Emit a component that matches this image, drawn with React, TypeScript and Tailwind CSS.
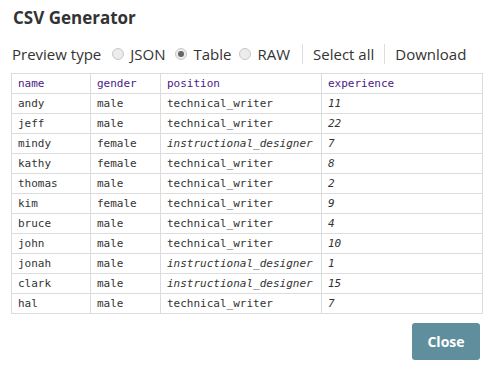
import React from "react";

const rows: [string, string, string, string][] = [
  ["andy", "male", "technical_writer", "11"],
  ["jeff", "male", "technical_writer", "22"],
  ["mindy", "female", "instructional_designer", "7"],
  ["kathy", "female", "technical_writer", "8"],
  ["thomas", "male", "technical_writer", "2"],
  ["kim", "female", "technical_writer", "9"],
  ["bruce", "male", "technical_writer", "4"],
  ["john", "male", "technical_writer", "10"],
  ["jonah", "male", "instructional_designer", "1"],
  ["clark", "male", "instructional_designer", "15"],
  ["hal", "male", "technical_writer", "7"],
];

function Radio({ checked }: { checked?: boolean }) {
  return (
    <span className="inline-flex w-[12px] h-[12px] rounded-full border border-[#c8c8c8] bg-[#ececec] items-center justify-center mr-[6px]">
      {checked && <span className="w-[6px] h-[6px] rounded-full bg-[#666]" />}
    </span>
  );
}

export default function App() {
  const mono = { fontFamily: "'DejaVu Sans Mono', monospace" };
  return (
    <div
      className="w-[495px] h-[370px] bg-white text-[#333] relative"
      style={{ fontFamily: "'Open Sans', sans-serif" }}
    >
      <div className="pl-[13px] pt-[6px] text-[17px] font-bold leading-[24px] text-[#333]">
        CSV Generator
      </div>
      <div className="flex items-center pl-[12px] mt-[13px] h-[22px] text-[15px] text-[#333]">
        <span className="mr-[11px]">Preview type</span>
        <label className="flex items-center mr-[10px]">
          <Radio />
          JSON
        </label>
        <label className="flex items-center mr-[8px]">
          <Radio checked />
          Table
        </label>
        <label className="flex items-center">
          <Radio />
          RAW
        </label>
        <span className="w-px h-[20px] bg-[#ddd] ml-[12px] mr-[10px]" />
        <span>Select all</span>
        <span className="w-px h-[20px] bg-[#ddd] ml-[10px] mr-[10px]" />
        <span>Download</span>
      </div>
      <table
        className="ml-[11px] mt-[8px] border-collapse text-[11px] leading-[19px]"
        style={mono}
      >
        <thead>
          <tr>
            {["name", "gender", "position", "experience"].map((h, i) => (
              <th
                key={h}
                className={`border border-[#dcdcdc] text-left font-normal text-[#4b1a86] pl-[6px] py-0 h-[20px] ${
                  ["w-[79px]", "w-[70px]", "w-[161px]", "w-[161px]"][i]
                }`}
              >
                {h}
              </th>
            ))}
          </tr>
        </thead>
        <tbody>
          {rows.map((r) => (
            <tr key={r[0]}>
              <td className="border border-[#dcdcdc] pl-[6px] h-[20px]">{r[0]}</td>
              <td className="border border-[#dcdcdc] pl-[6px]">{r[1]}</td>
              <td
                className={`border border-[#dcdcdc] pl-[6px] ${
                  r[2] === "instructional_designer" ? "italic" : ""
                }`}
              >
                {r[2]}
              </td>
              <td className="border border-[#dcdcdc] pl-[6px] italic">{r[3]}</td>
            </tr>
          ))}
        </tbody>
      </table>
      <div className="flex justify-end pr-[15px] mt-[9px]">
        <button className="w-[68px] h-[37px] rounded-[3px] bg-[#5f8f9c] text-white font-bold text-[14px]">
          Close
        </button>
      </div>
    </div>
  );
}
